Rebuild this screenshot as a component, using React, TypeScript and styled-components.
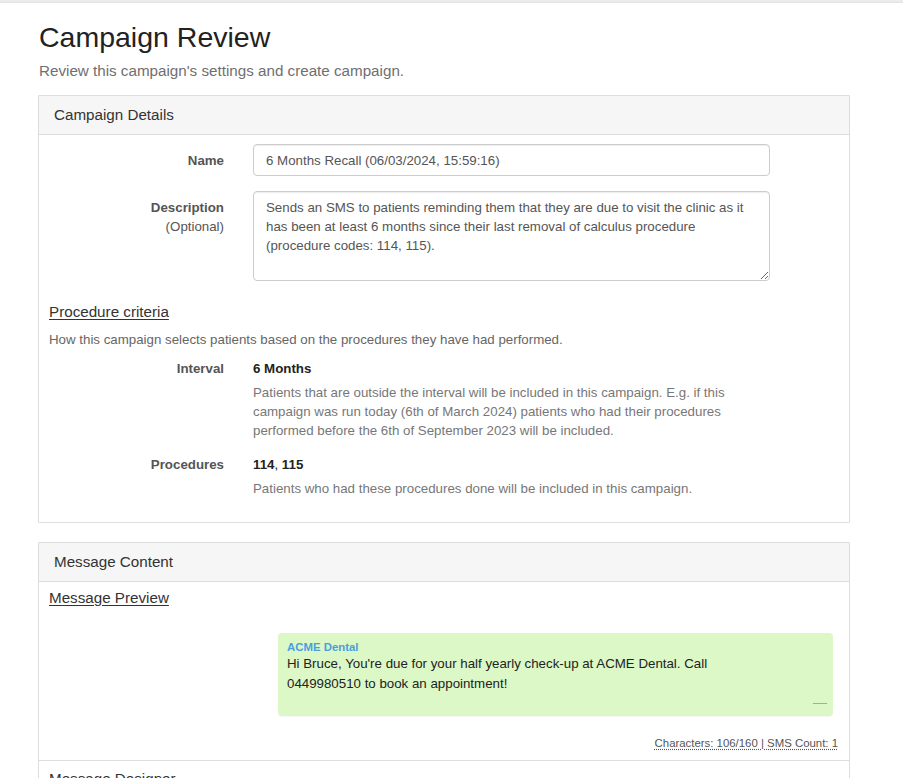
import React from "react";
import styled, { createGlobalStyle } from "styled-components";

const GlobalStyle = createGlobalStyle`
  html, body {
    margin: 0;
    padding: 0;
    background: #ffffff;
    font-family: "Liberation Sans", Arial, Helvetica, sans-serif;
    font-size: 13.3px;
    color: #333333;
  }
  * { box-sizing: border-box; }
`;

const TopRule = styled.div`
  height: 3px;
  background: linear-gradient(#f0f0f0, #e2e2e2);
`;

const Page = styled.div`
  margin-left: 38px;
  width: 812px;
  padding-bottom: 40px;
`;

const Title = styled.h1`
  margin: 19px 0 0 1px;
  font-size: 28.5px;
  font-weight: normal;
  line-height: 31px;
  color: #222222;
`;

const Subtitle = styled.p`
  margin: 7px 0 0 1px;
  font-size: 15.2px;
  line-height: 21px;
  color: #6f6f6f;
`;

const Panel = styled.section<{ $top: number }>`
  margin-top: ${(p) => p.$top}px;
  border: 1px solid #dddddd;
  border-radius: 1px;
  background: #ffffff;
`;

const PanelHeader = styled.div`
  background: #f6f6f6;
  border-bottom: 1px solid #dddddd;
  padding: 10px 15px;
  font-size: 15.2px;
  line-height: 18px;
  color: #333333;
`;

const PanelBody = styled.div<{ $pt: number; $pb: number; $divider?: boolean }>`
  padding: ${(p) => p.$pt}px 10px ${(p) => p.$pb}px;
  border-top: ${(p) => (p.$divider ? "1px solid #dddddd" : "none")};
`;

const FormRow = styled.div`
  display: grid;
  grid-template-columns: 175px 517px;
  column-gap: 29px;
  margin-bottom: 15px;
`;

const Label = styled.div`
  text-align: right;
  padding-top: 7px;
  line-height: 19px;
  color: #555555;
`;

const LabelMain = styled.div`
  font-weight: bold;
`;

const TextInput = styled.input`
  width: 517px;
  height: 32px;
  padding: 6px 12px;
  border: 1px solid #cccccc;
  border-radius: 4px;
  box-shadow: inset 0 1px 1px rgba(0, 0, 0, 0.075);
  font-family: "Liberation Sans", Arial, sans-serif;
  font-size: 13.3px;
  color: #555555;
  background: #ffffff;
  outline: none;
`;

const TextArea = styled.textarea`
  width: 517px;
  height: 90px;
  padding: 6px 12px;
  border: 1px solid #cccccc;
  border-radius: 4px;
  box-shadow: inset 0 1px 1px rgba(0, 0, 0, 0.075);
  font-family: "Liberation Sans", Arial, sans-serif;
  font-size: 13.3px;
  line-height: 19px;
  color: #555555;
  background: #ffffff;
  resize: vertical;
  outline: none;
  display: block;
`;

const SectionHeading = styled.h4<{ $mt: number }>`
  margin: ${(p) => p.$mt}px 0 0;
  font-size: 15.2px;
  font-weight: normal;
  line-height: 18px;
  color: #333333;
  text-decoration: underline;
  text-underline-offset: 2px;
`;

const Helper = styled.p`
  margin: 9px 0 10px;
  line-height: 19px;
  color: #666666;
`;

const InfoRow = styled.div`
  display: grid;
  grid-template-columns: 175px 517px;
  column-gap: 29px;
  margin-bottom: 15px;
`;

const InfoLabel = styled.div`
  text-align: right;
  font-weight: bold;
  line-height: 19px;
  color: #555555;
`;

const InfoValue = styled.div`
  line-height: 19px;
  color: #222222;
  margin-bottom: 5px;
  b { font-weight: bold; }
`;

const InfoText = styled.div`
  line-height: 19px;
  color: #777777;
`;

const BubbleWrap = styled.div`
  display: flex;
  justify-content: flex-end;
  margin-top: 26px;
  padding-right: 6px;
`;

const Bubble = styled.div`
  width: 555px;
  background: #dcf8c6;
  border-radius: 4px;
  padding: 7px 6px 6px 9px;
  box-shadow: 0 1px 0 rgba(0, 0, 0, 0.04);
`;

const Sender = styled.div`
  font-size: 11.4px;
  font-weight: bold;
  line-height: 14px;
  color: #4a9fdd;
`;

const MessageText = styled.div`
  line-height: 20px;
  color: #222222;
`;

const BubbleFooter = styled.div`
  display: flex;
  justify-content: flex-end;
  height: 16px;
  line-height: 16px;
  font-size: 14px;
  color: #a8a8a8;
  padding-right: 0;
`;

const Counter = styled.div`
  margin-top: 20px;
  text-align: right;
  padding-right: 1px;
  font-size: 11.4px;
  line-height: 14px;
  color: #555555;
  span {
    text-decoration: underline dotted;
    text-underline-offset: 2px;
  }
`;

export default function App() {
  return (
    <>
      <GlobalStyle />
      <TopRule />
      <Page>
        <Title>Campaign Review</Title>
        <Subtitle>Review this campaign's settings and create campaign.</Subtitle>

        <Panel $top={14}>
          <PanelHeader>Campaign Details</PanelHeader>
          <PanelBody $pt={9} $pb={9}>
            <FormRow>
              <Label>
                <LabelMain>Name</LabelMain>
              </Label>
              <TextInput readOnly value="6 Months Recall (06/03/2024, 15:59:16)" />
            </FormRow>
            <FormRow>
              <Label>
                <LabelMain>Description</LabelMain>
                <div>(Optional)</div>
              </Label>
              <TextArea
                readOnly
                value="Sends an SMS to patients reminding them that they are due to visit the clinic as it has been at least 6 months since their last removal of calculus procedure (procedure codes: 114, 115)."
              />
            </FormRow>

            <SectionHeading $mt={22}>Procedure criteria</SectionHeading>
            <Helper>How this campaign selects patients based on the procedures they have had performed.</Helper>

            <InfoRow>
              <InfoLabel>Interval</InfoLabel>
              <div>
                <InfoValue>
                  <b>6 Months</b>
                </InfoValue>
                <InfoText>
                  Patients that are outside the interval will be included in this campaign. E.g. if this
                  campaign was run today (6th of March 2024) patients who had their procedures
                  performed before the 6th of September 2023 will be included.
                </InfoText>
              </div>
            </InfoRow>
            <InfoRow>
              <InfoLabel>Procedures</InfoLabel>
              <div>
                <InfoValue>
                  <b>114</b>, <b>115</b>
                </InfoValue>
                <InfoText>Patients who had these procedures done will be included in this campaign.</InfoText>
              </div>
            </InfoRow>
          </PanelBody>
        </Panel>

        <Panel $top={19}>
          <PanelHeader>Message Content</PanelHeader>
          <PanelBody $pt={7} $pb={10}>
            <SectionHeading $mt={0}>Message Preview</SectionHeading>
            <BubbleWrap>
              <Bubble>
                <Sender>ACME Dental</Sender>
                <MessageText>
                  Hi Bruce, You're due for your half yearly check-up at ACME Dental. Call
                  <br />
                  0449980510 to book an appointment!
                </MessageText>
                <BubbleFooter>—</BubbleFooter>
              </Bubble>
            </BubbleWrap>
            <Counter>
              <span>Characters: 106/160 | SMS Count: 1</span>
            </Counter>
          </PanelBody>
          <PanelBody $pt={9} $pb={10} $divider>
            <SectionHeading $mt={0}>Message Designer</SectionHeading>
            <Helper>Design the message that will be sent to patients.</Helper>
          </PanelBody>
        </Panel>
      </Page>
    </>
  );
}
